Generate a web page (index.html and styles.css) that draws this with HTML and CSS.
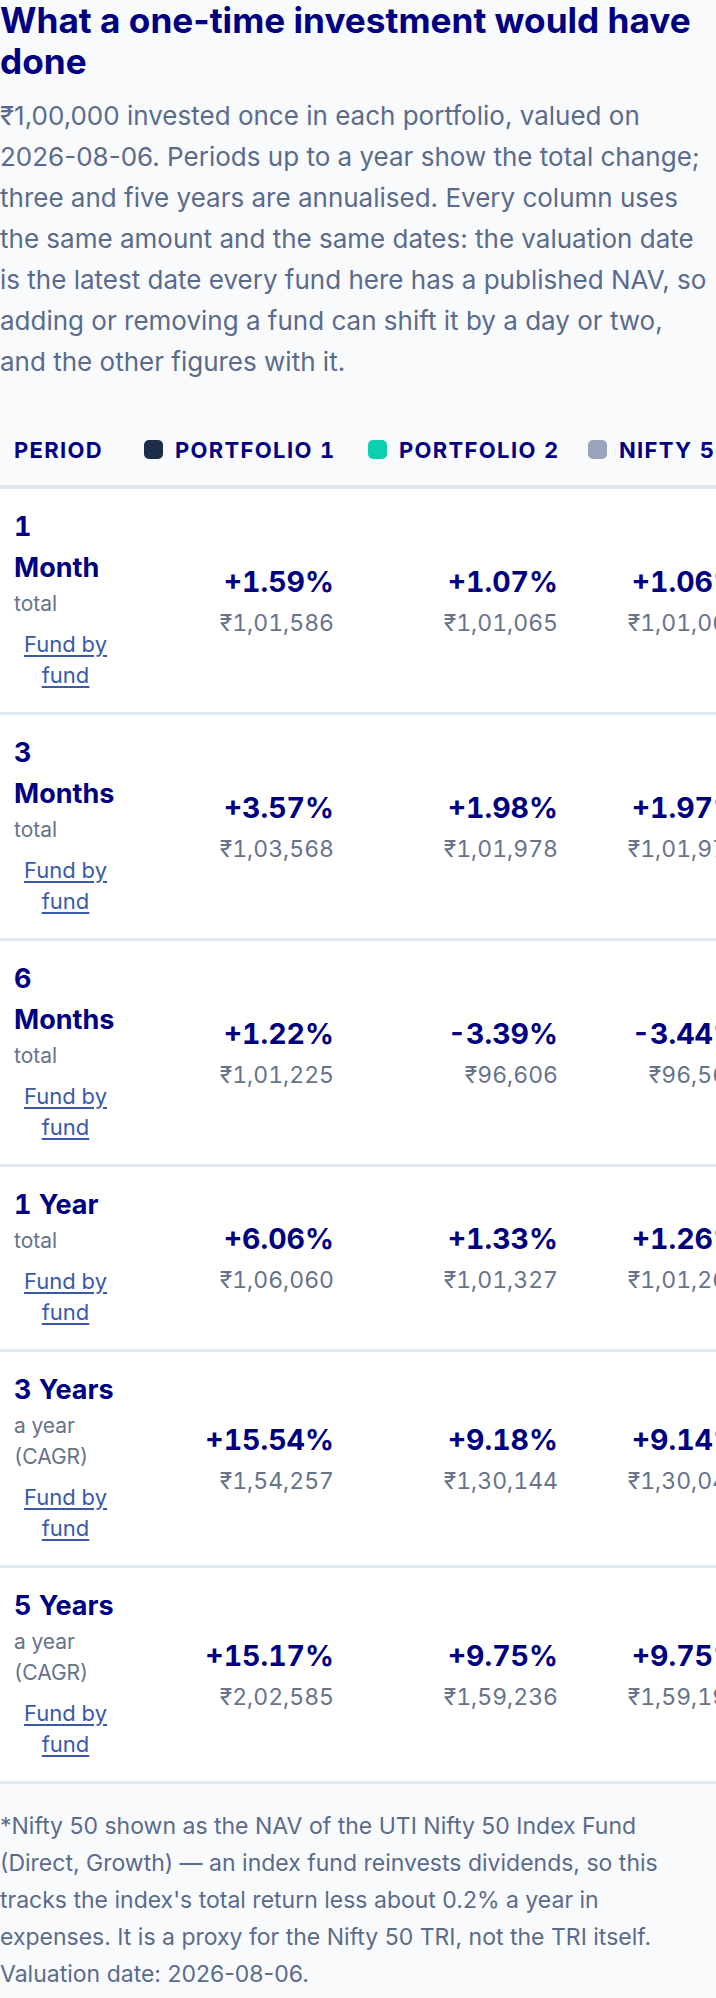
FILE: index.html
```html
<!DOCTYPE html>
<html lang="en">
<head>
<meta charset="utf-8">
<title>One-time investment</title>
<link rel="stylesheet" href="styles.css">
</head>
<body>
<main class="page">
  <section class="intro">
    <h2 class="title">What a one-time investment would have done</h2>
    <p class="lede">₹1,00,000 invested once in each portfolio, valued on <span class="nowrap">2026-08-06.</span> Periods up to a year show the total change; three and five years are annualised. Every column uses the same amount and the same dates: the valuation date is the latest date every fund here has a published NAV, so adding or removing a fund can shift it by a day or two, and the other figures with it.</p>
  </section>

  <div class="table-wrap">
    <table class="returns">
      <colgroup>
        <col class="c-period">
        <col class="c-val">
        <col class="c-val">
        <col class="c-last">
      </colgroup>
      <thead>
        <tr>
          <th class="th-period">Period</th>
          <th class="th-val"><span class="key"><span class="dot dot-p1"></span>Portfolio 1</span></th>
          <th class="th-val"><span class="key"><span class="dot dot-p2"></span>Portfolio 2</span></th>
          <th class="th-val th-last"><span class="key"><span class="dot dot-nifty"></span>Nifty 50*</span></th>
        </tr>
      </thead>
      <tbody>
        <tr>
          <td class="td-period"><span class="p-label">1 Month</span><span class="p-note">total</span><a class="fund-link" href="#">Fund by fund</a></td>
          <td class="td-val"><span class="pct">+1.59%</span><span class="amt">₹1,01,586</span></td>
          <td class="td-val"><span class="pct">+1.07%</span><span class="amt">₹1,01,065</span></td>
          <td class="td-val"><span class="pct">+1.06%</span><span class="amt">₹1,01,060</span></td>
        </tr>
        <tr>
          <td class="td-period"><span class="p-label">3 Months</span><span class="p-note">total</span><a class="fund-link" href="#">Fund by fund</a></td>
          <td class="td-val"><span class="pct">+3.57%</span><span class="amt">₹1,03,568</span></td>
          <td class="td-val"><span class="pct">+1.98%</span><span class="amt">₹1,01,978</span></td>
          <td class="td-val"><span class="pct">+1.97%</span><span class="amt">₹1,01,970</span></td>
        </tr>
        <tr>
          <td class="td-period"><span class="p-label">6 Months</span><span class="p-note">total</span><a class="fund-link" href="#">Fund by fund</a></td>
          <td class="td-val"><span class="pct">+1.22%</span><span class="amt">₹1,01,225</span></td>
          <td class="td-val"><span class="pct">-3.39%</span><span class="amt">₹96,606</span></td>
          <td class="td-val"><span class="pct">-3.44%</span><span class="amt">₹96,560</span></td>
        </tr>
        <tr>
          <td class="td-period"><span class="p-label">1 Year</span><span class="p-note">total</span><a class="fund-link" href="#">Fund by fund</a></td>
          <td class="td-val"><span class="pct">+6.06%</span><span class="amt">₹1,06,060</span></td>
          <td class="td-val"><span class="pct">+1.33%</span><span class="amt">₹1,01,327</span></td>
          <td class="td-val"><span class="pct">+1.26%</span><span class="amt">₹1,01,260</span></td>
        </tr>
        <tr>
          <td class="td-period"><span class="p-label">3 Years</span><span class="p-note">a year (CAGR)</span><a class="fund-link" href="#">Fund by fund</a></td>
          <td class="td-val"><span class="pct">+15.54%</span><span class="amt">₹1,54,257</span></td>
          <td class="td-val"><span class="pct">+9.18%</span><span class="amt">₹1,30,144</span></td>
          <td class="td-val"><span class="pct">+9.14%</span><span class="amt">₹1,30,040</span></td>
        </tr>
        <tr>
          <td class="td-period"><span class="p-label">5 Years</span><span class="p-note">a year (CAGR)</span><a class="fund-link" href="#">Fund by fund</a></td>
          <td class="td-val"><span class="pct">+15.17%</span><span class="amt">₹2,02,585</span></td>
          <td class="td-val"><span class="pct">+9.75%</span><span class="amt">₹1,59,236</span></td>
          <td class="td-val"><span class="pct">+9.75%</span><span class="amt">₹1,59,190</span></td>
        </tr>
      </tbody>
    </table>
  </div>

  <p class="footnote">*Nifty 50 shown as the NAV of the UTI Nifty 50 Index Fund (Direct, Growth) — an index fund reinvests dividends, so this tracks the index's total return less about 0.2% a year in expenses. It is a proxy for the Nifty 50 TRI, not the TRI itself. Valuation date: 2026-08-06.</p>
</main>
</body>
</html>
```

FILE: styles.css
```css
html, body {
  margin: 0;
  padding: 0;
}

body {
  background: #f8fafc;
  font-family: Inter, "Noto Sans", "Liberation Sans", sans-serif;
  color: #5b6b8b;
}

.page {
  width: 716px;
  overflow: hidden;
}

.title {
  margin: 0;
  font-size: 35.2px;
  line-height: 41px;
  font-weight: 700;
  color: #000080;
}

.lede {
  margin: 13px 0 0;
  padding-right: 4px;
  font-size: 26px;
  line-height: 41px;
  color: #5b6b8b;
}

.nowrap {
  white-space: nowrap;
}

.table-wrap {
  margin-top: 34px;
  overflow-x: auto;
  scrollbar-width: none;
}

.returns {
  border-collapse: separate;
  border-spacing: 0;
  table-layout: fixed;
  width: 759px;
  font-variant-numeric: tabular-nums;
}

.c-period { width: 127px; }
.c-val { width: 224px; }
.c-last { width: 184px; }

.returns th {
  background: #f8fafc;
  border-bottom: 4px solid #e2e8f0;
  padding: 18.5px 17px;
  font-size: 22px;
  line-height: 30px;
  font-weight: 700;
  text-transform: uppercase;
  letter-spacing: 0.06em;
  color: #000080;
  white-space: nowrap;
  text-align: left;
}

.returns .th-period {
  padding-left: 14px;
  padding-right: 10px;
}

.returns .th-last {
  padding-left: 13px;
}

.key {
  display: inline-flex;
  align-items: center;
  gap: 12px;
}

.dot {
  display: inline-block;
  width: 19px;
  height: 19px;
  border-radius: 5px;
}

.dot-p1 { background: #1c2d4a; }
.dot-p2 { background: #0ad0b0; }
.dot-nifty { background: #98a4bc; }

.returns td {
  background: #ffffff;
  border-bottom: 3px solid #e2e8f0;
  padding: 17px 17px;
}

.returns .td-period {
  vertical-align: top;
  padding-left: 14px;
  padding-right: 10px;
}

.p-label {
  display: block;
  font-size: 27px;
  line-height: 41px;
  font-weight: 700;
  color: #000080;
}

.p-note {
  display: block;
  font-size: 21px;
  line-height: 31px;
  color: #667389;
}

.fund-link {
  display: block;
  margin-top: 6px;
  padding: 4px 3px;
  text-align: center;
  font-size: 22px;
  line-height: 31px;
  color: #3a5aa8;
  text-decoration: underline;
  text-underline-offset: 3px;
  text-decoration-thickness: 1.5px;
}

.returns .td-val {
  vertical-align: middle;
  text-align: right;
  white-space: nowrap;
}

.pct {
  display: block;
  font-size: 28.5px;
  line-height: 40px;
  font-weight: 700;
  color: #000080;
}

.amt {
  display: block;
  margin-top: 5px;
  font-size: 23px;
  line-height: 32px;
  color: #667389;
}

.footnote {
  margin: 0;
  padding: 24px 18px 12px 0;
  font-size: 23px;
  line-height: 37px;
  color: #5b6b8b;
}
```
